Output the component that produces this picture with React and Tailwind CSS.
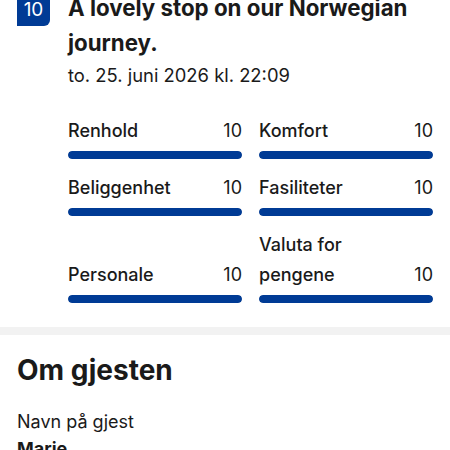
import React from "react";

const ratings = [
  { label: "Renhold", score: 10 },
  { label: "Komfort", score: 10 },
  { label: "Beliggenhet", score: 10 },
  { label: "Fasiliteter", score: 10 },
  { label: "Personale", score: 10 },
  { label: "Valuta for pengene", score: 10 },
];

const RatingBar = ({ label, score }) => (
  <div className="flex flex-col justify-end">
    <div className="flex items-end justify-between text-[18px] leading-[30px] text-[#1a1a1a]">
      <span className="font-medium max-w-[120px]">{label}</span>
      <span>{score}</span>
    </div>
    <div className="mt-[5px] h-2 rounded-full bg-[#e7e7e7] overflow-hidden">
      <div
        className="h-full rounded-full bg-[#003b95]"
        style={{ width: `${(score / 10) * 100}%` }}
      />
    </div>
  </div>
);

export default function App() {
  return (
    <div
      className="w-[450px] h-[450px] overflow-hidden bg-white text-[#1a1a1a]"
      style={{ fontFamily: "Inter, 'Noto Sans', sans-serif" }}
    >
      {/* Review */}
      <div className="mt-[-10px] flex gap-[18px] pl-[17px] pr-[17px]">
        <div className="shrink-0 w-[33px] h-[36px] rounded-[6px] rounded-bl-none bg-[#003b95] text-white text-[19px] flex justify-center pt-[10px] leading-[20px]">
          10
        </div>
        <div className="flex-1">
          <h2 className="text-[22.3px] leading-[35px] font-bold">
            A lovely stop on our Norwegian journey.
          </h2>
          <p className="text-[18.4px] leading-[30px]">to. 25. juni 2026 kl. 22:09</p>

          <div className="mt-[26px] grid grid-cols-2 gap-x-[17px] gap-y-[14px]">
            {ratings.map((r) => (
              <RatingBar key={r.label} label={r.label} score={r.score} />
            ))}
          </div>
        </div>
      </div>

      <div className="mt-[24px] h-2 bg-[#f2f2f2]" />

      {/* Guest info */}
      <div className="px-[17px] pt-[17px]">
        <h2 className="text-[28px] leading-[36px] font-bold">Om gjesten</h2>
        <div className="mt-[22px] text-[18px] leading-[24px]">Navn på gjest</div>
        <div className="mt-[3px] text-[18px] leading-[24px] font-bold">Marie</div>
      </div>
    </div>
  );
}
